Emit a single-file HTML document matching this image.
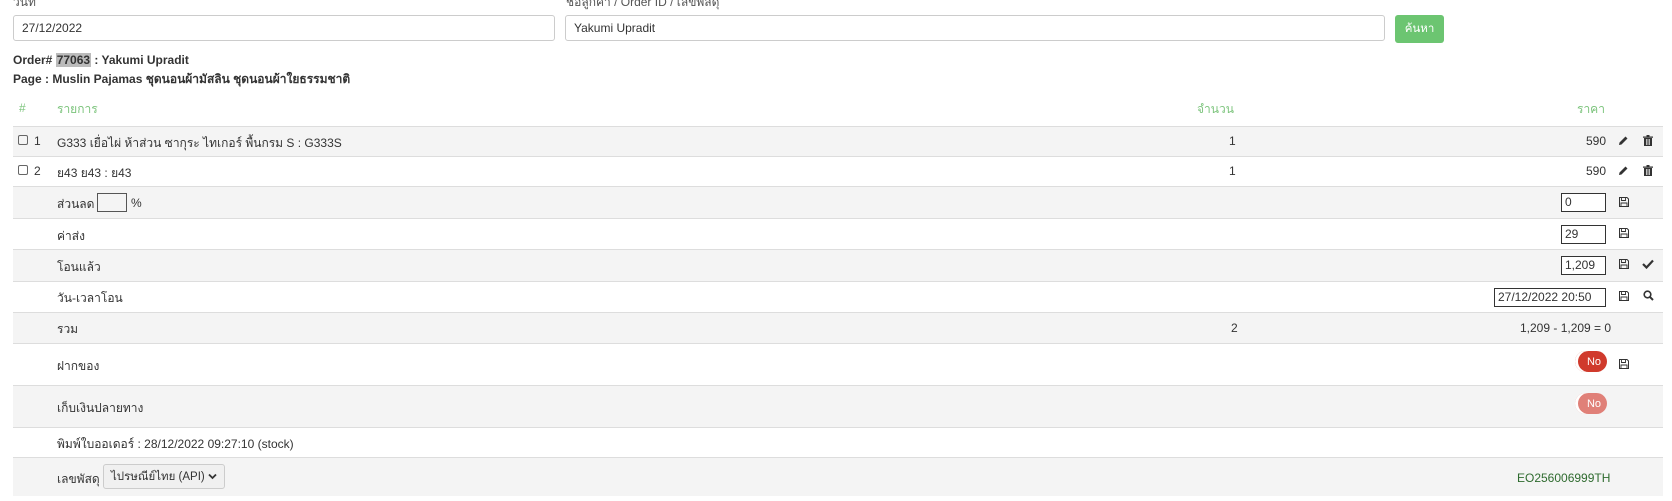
<!DOCTYPE html>
<html><head><meta charset="utf-8"><style>
*{box-sizing:border-box;margin:0;padding:0}
body{width:1672px;height:501px;overflow:hidden;background:#fff;font-family:"Liberation Sans",sans-serif;font-size:12px;color:#333;position:relative}
.a{position:absolute;line-height:16px;white-space:nowrap}
.t{margin-top:1px}
.inp{position:absolute;border:1px solid #ccc;border-radius:3px;background:#fff;padding-left:8px;line-height:24px;font-size:12px}
.row{position:absolute;left:13px;width:1650px;border-top:1px solid #ddd}
.g{background:#f4f4f4}
.box{position:absolute;border:1px solid #333;background:#fff;height:19px;line-height:17px;padding-left:3px;font-size:12px}
.ic{position:absolute}
.tog{position:absolute;left:1575px;width:32px;height:21px;border-radius:11px;background:#d03a2c;color:#fff;font-size:11px;line-height:22px;text-align:right;padding-right:6px;box-shadow:inset 3px 0 0 #fff}
</style></head><body>
<div class="a" style="left:13px;top:-6px;color:#555">วันที่</div>
<div class="a" style="left:566px;top:-6px;color:#555">ชื่อลูกค้า / Order ID / เลขพัสดุ</div>
<div class="inp" style="left:13px;top:15px;width:542px;height:26px">27/12/2022</div>
<div class="inp" style="left:565px;top:15px;width:820px;height:26px">Yakumi Upradit</div>
<div class="a" style="left:1395px;top:15px;width:49px;height:28px;background:#6cc571;border-radius:3px;color:#fff;text-align:center;line-height:28px;font-size:11.5px">ค้นหา</div>
<div class="a" style="left:13px;top:52px;font-weight:bold;font-size:12px">Order# <span style="background:#bbb;padding:0 1px">77063</span> : Yakumi Upradit</div>
<div class="a" style="left:13px;top:71px;font-weight:bold;font-size:12px">Page : Muslin Pajamas ชุดนอนผ้ามัสลิน ชุดนอนผ้าใยธรรมชาติ</div>
<div class="a" style="left:19px;top:100px;color:#7cc47c">#</div>
<div class="a t" style="left:57px;top:100px;color:#7cc47c">รายการ</div>
<div class="a t" style="left:1197px;top:100px;color:#7cc47c">จำนวน</div>
<div class="a t" style="left:1577px;top:100px;color:#7cc47c">ราคา</div>

<div class="row g" style="top:126px;height:30px"></div>
<div class="row" style="top:156px;height:30px"></div>
<div class="row g" style="top:186px;height:32px"></div>
<div class="row" style="top:218px;height:31px"></div>
<div class="row g" style="top:249px;height:32px"></div>
<div class="row" style="top:281px;height:31px"></div>
<div class="row g" style="top:312px;height:31px"></div>
<div class="row" style="top:343px;height:42px"></div>
<div class="row g" style="top:385px;height:42px"></div>
<div class="row" style="top:427px;height:30px"></div>
<div class="row g" style="top:457px;height:39px"></div>

<div class="a" style="left:18px;top:135px;width:10px;height:10px;border:1px solid #666;border-radius:2px"></div>
<div class="a" style="left:34px;top:133px">1</div>
<div class="a t" style="left:57px;top:134px">G333 เยื่อไผ่ ห้าส่วน ซากุระ ไทเกอร์ พื้นกรม S : G333S</div>
<div class="a" style="left:1229px;top:133px">1</div>
<div class="a" style="left:1586px;top:133px">590</div>
<div class="a" style="left:18px;top:165px;width:10px;height:10px;border:1px solid #666;border-radius:2px"></div>
<div class="a" style="left:34px;top:163px">2</div>
<div class="a t" style="left:57px;top:164px">ย43 ย43 : ย43</div>
<div class="a" style="left:1229px;top:163px">1</div>
<div class="a" style="left:1586px;top:163px">590</div>

<div class="a t" style="left:57px;top:195px">ส่วนลด</div>
<div class="a" style="left:97px;top:193px;width:30px;height:19px;border:1px solid #555"></div>
<div class="a" style="left:131px;top:195px">%</div>
<div class="a t" style="left:57px;top:227px">ค่าส่ง</div>
<div class="a t" style="left:57px;top:258px">โอนแล้ว</div>
<div class="a t" style="left:57px;top:289px">วัน-เวลาโอน</div>
<div class="a t" style="left:57px;top:320px">รวม</div>
<div class="a" style="left:1231px;top:320px">2</div>
<div class="a" style="left:1520px;top:320px">1,209 - 1,209 = 0</div>
<div class="a t" style="left:57px;top:357px">ฝากของ</div>
<div class="a t" style="left:57px;top:399px">เก็บเงินปลายทาง</div>
<div class="a t" style="left:57px;top:435px">พิมพ์ใบออเดอร์ : 28/12/2022 09:27:10 (stock)</div>
<div class="a t" style="left:57px;top:470px">เลขพัสดุ</div>
<div class="a" style="left:103px;top:464px;width:122px;height:25px;border:1px solid #ccc;border-radius:3px;background:#f0f0f0;padding-left:7px;line-height:25px;font-size:11.5px">ไปรษณีย์ไทย (API)</div>
<svg class="ic" style="left:208px;top:473px" width="9" height="7" viewBox="0 0 9 7"><path d="M1 1.5l3.5 3.5L8 1.5" fill="none" stroke="#333" stroke-width="1.8"/></svg>
<div class="a" style="left:1517px;top:470px;color:#2f6b2f">EO256006999TH</div>

<div class="box" style="left:1561px;top:193px;width:45px">0</div>
<div class="box" style="left:1561px;top:225px;width:45px">29</div>
<div class="box" style="left:1561px;top:256px;width:45px">1,209</div>
<div class="box" style="left:1494px;top:288px;width:112px">27/12/2022 20:50</div>

<div class="tog" style="top:351px">No</div>
<div class="tog" style="top:393px;background:#e08078">No</div>

<svg class="ic" style="left:1618px;top:135px" width="11" height="11" viewBox="0 0 11 11"><path d="M1 10 L1.5 7.5 L7.5 1.5 L9.5 3.5 L3.5 9.5 Z" fill="#333"/></svg>
<svg class="ic" style="left:1618px;top:165px" width="11" height="11" viewBox="0 0 11 11"><path d="M1 10 L1.5 7.5 L7.5 1.5 L9.5 3.5 L3.5 9.5 Z" fill="#333"/></svg>
<svg class="ic" style="left:1643px;top:135px" width="10" height="11" viewBox="0 0 10 11"><path d="M0 1.5h10v1.3H0zM3.5 0h3v1.5h-3zM1 3h8v8H1z" fill="#333"/><path d="M3.5 4v6M5 4v6M6.5 4v6" stroke="#f4f4f4" stroke-width=".7"/></svg>
<svg class="ic" style="left:1643px;top:165px" width="10" height="11" viewBox="0 0 10 11"><path d="M0 1.5h10v1.3H0zM3.5 0h3v1.5h-3zM1 3h8v8H1z" fill="#333"/><path d="M3.5 4v6M5 4v6M6.5 4v6" stroke="#fff" stroke-width=".7"/></svg>
<svg class="ic" style="left:1619px;top:197px" width="10" height="10" viewBox="0 0 10 10"><path d="M.5.5h7.5l1.5 1.5v7.5h-9z" fill="none" stroke="#333"/><path d="M2.5 1v2.5h4V1M2 6h6v3.5H2z" fill="none" stroke="#333" stroke-width=".9"/></svg>
<svg class="ic" style="left:1619px;top:228px" width="10" height="10" viewBox="0 0 10 10"><path d="M.5.5h7.5l1.5 1.5v7.5h-9z" fill="none" stroke="#333"/><path d="M2.5 1v2.5h4V1M2 6h6v3.5H2z" fill="none" stroke="#333" stroke-width=".9"/></svg>
<svg class="ic" style="left:1619px;top:259px" width="10" height="10" viewBox="0 0 10 10"><path d="M.5.5h7.5l1.5 1.5v7.5h-9z" fill="none" stroke="#333"/><path d="M2.5 1v2.5h4V1M2 6h6v3.5H2z" fill="none" stroke="#333" stroke-width=".9"/></svg>
<svg class="ic" style="left:1619px;top:291px" width="10" height="10" viewBox="0 0 10 10"><path d="M.5.5h7.5l1.5 1.5v7.5h-9z" fill="none" stroke="#333"/><path d="M2.5 1v2.5h4V1M2 6h6v3.5H2z" fill="none" stroke="#333" stroke-width=".9"/></svg>
<svg class="ic" style="left:1619px;top:359px" width="10" height="10" viewBox="0 0 10 10"><path d="M.5.5h7.5l1.5 1.5v7.5h-9z" fill="none" stroke="#333"/><path d="M2.5 1v2.5h4V1M2 6h6v3.5H2z" fill="none" stroke="#333" stroke-width=".9"/></svg>
<svg class="ic" style="left:1642px;top:259px" width="12" height="10" viewBox="0 0 12 10"><path d="M1 5l3.5 3.5L11 1.5" fill="none" stroke="#333" stroke-width="2.2"/></svg>
<svg class="ic" style="left:1643px;top:290px" width="11" height="11" viewBox="0 0 11 11"><circle cx="4.5" cy="4.5" r="3.3" fill="none" stroke="#333" stroke-width="1.6"/><path d="M7 7l3 3" stroke="#333" stroke-width="2"/></svg>
</body></html>
